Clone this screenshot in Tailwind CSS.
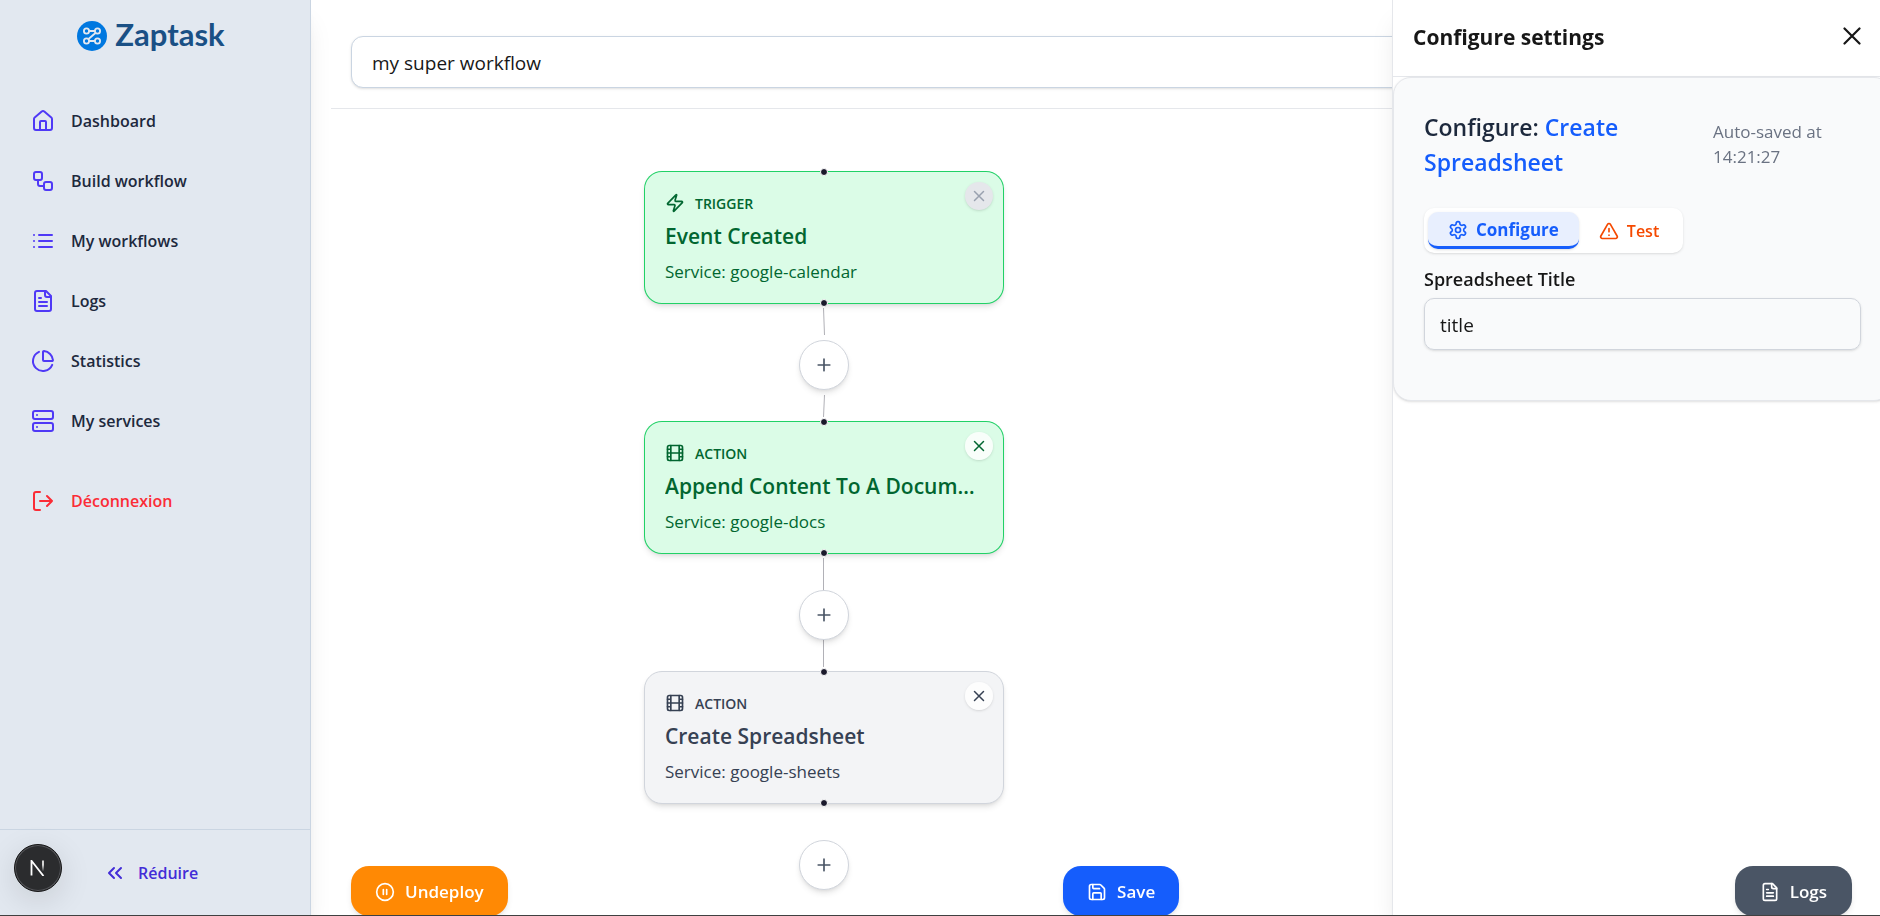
<!DOCTYPE html>
<html lang="en">
<head>
<meta charset="utf-8">
<meta name="viewport" content="width=device-width, initial-scale=1">
<title>Zaptask – Build workflow</title>
<script src="https://cdn.jsdelivr.net/npm/@tailwindcss/browser@4"></script>
</head>
<body class="h-screen overflow-hidden bg-white font-['Open_Sans','Noto_Sans',sans-serif] text-neutral-900">

<!-- Shared icon shapes -->
<svg class="hidden" aria-hidden="true">
  <symbol id="i-home" viewBox="0 0 24 24"><path d="M15 21v-8a1 1 0 0 0-1-1h-4a1 1 0 0 0-1 1v8"/><path d="M3 10a2 2 0 0 1 .709-1.528l7-6a2 2 0 0 1 2.582 0l7 6A2 2 0 0 1 21 10v9a2 2 0 0 1-2 2H5a2 2 0 0 1-2-2z"/></symbol>
  <symbol id="i-workflow" viewBox="0 0 24 24"><rect width="8" height="8" x="3" y="3" rx="2"/><path d="M7 11v4a2 2 0 0 0 2 2h4"/><rect width="8" height="8" x="13" y="13" rx="2"/></symbol>
  <symbol id="i-list" viewBox="0 0 24 24"><path d="M3 12h.01M3 18h.01M3 6h.01M8 12h13M8 18h13M8 6h13"/></symbol>
  <symbol id="i-file" viewBox="0 0 24 24"><path d="M15 2H6a2 2 0 0 0-2 2v16a2 2 0 0 0 2 2h12a2 2 0 0 0 2-2V7Z"/><path d="M14 2v4a2 2 0 0 0 2 2h4M10 9H8M16 13H8M16 17H8"/></symbol>
  <symbol id="i-pie" viewBox="0 0 24 24"><path d="M21 12c.552 0 1.005-.449.95-.998a10 10 0 0 0-8.953-8.951c-.55-.055-.998.398-.998.95v8a1 1 0 0 0 1 1z"/><path d="M21.21 15.89A10 10 0 1 1 8 2.83"/></symbol>
  <symbol id="i-server" viewBox="0 0 24 24"><rect width="20" height="8" x="2" y="2" rx="2"/><rect width="20" height="8" x="2" y="14" rx="2"/><path d="M6 6h.01M6 18h.01"/></symbol>
  <symbol id="i-logout" viewBox="0 0 24 24"><path d="M9 21H5a2 2 0 0 1-2-2V5a2 2 0 0 1 2-2h4M16 17l5-5-5-5M21 12H9"/></symbol>
  <symbol id="i-chevrons" viewBox="0 0 24 24"><path d="m11 17-5-5 5-5M18 17l-5-5 5-5"/></symbol>
  <symbol id="i-zap" viewBox="0 0 24 24"><path d="M4 14a1 1 0 0 1-.78-1.63l9.9-10.2a.5.5 0 0 1 .86.46l-1.92 6.02A1 1 0 0 0 13 10h7a1 1 0 0 1 .78 1.63l-9.9 10.2a.5.5 0 0 1-.86-.46l1.92-6.02A1 1 0 0 0 11 14z"/></symbol>
  <symbol id="i-film" viewBox="0 0 24 24"><rect width="18" height="18" x="3" y="3" rx="2"/><path d="M7 3v18M3 7.500h4M3 12h18M3 16.500h4M17 3v18M17 7.500h4M17 16.500h4"/></symbol>
  <symbol id="i-x" viewBox="0 0 24 24"><path d="M18 6 6 18M6 6l12 12"/></symbol>
  <symbol id="i-plus" viewBox="0 0 24 24"><path d="M5 12h14M12 5v14"/></symbol>
  <symbol id="i-gear" viewBox="0 0 24 24"><path d="M12.220 2h-.44a2 2 0 0 0-2 2v.18a2 2 0 0 1-1 1.730l-.43.25a2 2 0 0 1-2 0l-.15-.08a2 2 0 0 0-2.730.73l-.22.38a2 2 0 0 0 .73 2.730l.15.1a2 2 0 0 1 1 1.720v.51a2 2 0 0 1-1 1.740l-.15.09a2 2 0 0 0-.73 2.730l.22.38a2 2 0 0 0 2.730.73l.15-.08a2 2 0 0 1 2 0l.43.25a2 2 0 0 1 1 1.730V20a2 2 0 0 0 2 2h.44a2 2 0 0 0 2-2v-.18a2 2 0 0 1 1-1.730l.43-.25a2 2 0 0 1 2 0l.15.08a2 2 0 0 0 2.730-.73l.22-.39a2 2 0 0 0-.73-2.730l-.15-.08a2 2 0 0 1-1-1.740v-.5a2 2 0 0 1 1-1.740l.15-.09a2 2 0 0 0 .73-2.730l-.22-.38a2 2 0 0 0-2.730-.73l-.15.08a2 2 0 0 1-2 0l-.43-.25a2 2 0 0 1-1-1.730V4a2 2 0 0 0-2-2z"/><circle cx="12" cy="12" r="3"/></symbol>
  <symbol id="i-warn" viewBox="0 0 24 24"><path d="m21.730 18-8-14a2 2 0 0 0-3.480 0l-8 14A2 2 0 0 0 4 21h16a2 2 0 0 0 1.730-3M12 9v4M12 17h.01"/></symbol>
  <symbol id="i-pause" viewBox="0 0 24 24"><circle cx="12" cy="12" r="10"/><path d="M10 15V9M14 15V9"/></symbol>
  <symbol id="i-save" viewBox="0 0 24 24"><path d="M15.200 3a2 2 0 0 1 1.400.6l3.800 3.800a2 2 0 0 1 .6 1.400V19a2 2 0 0 1-2 2H5a2 2 0 0 1-2-2V5a2 2 0 0 1 2-2z"/><path d="M17 21v-7a1 1 0 0 0-1-1H8a1 1 0 0 0-1 1v7M7 3v4a1 1 0 0 0 1 1h7"/></symbol>
</svg>

<div class="flex h-full">
  <!-- Sidebar -->
  <aside class="relative z-10 flex w-[311px] shrink-0 flex-col border-r border-slate-300 bg-slate-200 shadow-xl">
    <a href="#" class="flex h-[72px] items-center justify-center gap-2 pr-3 pl-1 font-['Lato'] text-[31px] leading-9 font-bold text-[#1a5085]">
      <svg class="size-[30px]" viewBox="0 0 30 30" fill="none" stroke="#e2e8f0" stroke-width="1.800" aria-hidden="true">
        <circle cx="15" cy="15" r="15" fill="#0078e0" stroke="none"/>
        <circle cx="9.500" cy="10" r="2.600"/><circle cx="20.500" cy="10" r="2.600"/><circle cx="9.500" cy="20" r="2.600"/><circle cx="20.500" cy="20" r="2.600"/>
        <path d="M12 10h6M12 20h6M18.500 12 11.500 18"/>
      </svg>
      <span class="pb-1">Zaptask</span>
    </a>
    <nav class="mt-[23px] flex flex-1 flex-col gap-2 px-[15px] text-[16px] font-semibold text-slate-800">
      <a href="#" class="flex h-[52px] items-center gap-4 px-4"><svg class="size-6 fill-none stroke-indigo-600 stroke-2 [stroke-linecap:round] [stroke-linejoin:round]"><use href="#i-home"/></svg>Dashboard</a>
      <a href="#" class="flex h-[52px] items-center gap-4 px-4"><svg class="size-6 fill-none stroke-indigo-600 stroke-2 [stroke-linecap:round] [stroke-linejoin:round]"><use href="#i-workflow"/></svg>Build workflow</a>
      <a href="#" class="flex h-[52px] items-center gap-4 px-4"><svg class="size-6 fill-none stroke-indigo-600 stroke-2 [stroke-linecap:round] [stroke-linejoin:round]"><use href="#i-list"/></svg>My workflows</a>
      <a href="#" class="flex h-[52px] items-center gap-4 px-4"><svg class="size-6 fill-none stroke-indigo-600 stroke-2 [stroke-linecap:round] [stroke-linejoin:round]"><use href="#i-file"/></svg>Logs</a>
      <a href="#" class="flex h-[52px] items-center gap-4 px-4"><svg class="size-6 fill-none stroke-indigo-600 stroke-2 [stroke-linecap:round] [stroke-linejoin:round]"><use href="#i-pie"/></svg>Statistics</a>
      <a href="#" class="flex h-[52px] items-center gap-4 px-4"><svg class="size-6 fill-none stroke-indigo-600 stroke-2 [stroke-linecap:round] [stroke-linejoin:round]"><use href="#i-server"/></svg>My services</a>
      <button type="button" class="mt-5 flex h-[52px] items-center gap-4 px-4 text-[#fb2c36]"><svg class="size-6 fill-none stroke-current stroke-2 [stroke-linecap:round] [stroke-linejoin:round]"><use href="#i-logout"/></svg>Déconnexion</button>
    </nav>
    <div class="flex h-[87px] items-center border-t border-slate-300 pl-[14px]">
      <button type="button" aria-label="Open developer tools" class="mb-[11px] flex size-12 items-center justify-center rounded-full border border-neutral-900 bg-[#2b2c2e] shadow-[0_8px_32px_rgb(0_0_0/0.12),inset_0_0_0_1px_#55565a]">
        <svg class="h-4 w-4" viewBox="0 0 16 16" fill="none" stroke-width="1.800" aria-hidden="true">
          <defs><linearGradient id="n-fade" x1="0" y1="0" x2="0" y2="1"><stop offset="0.4" stop-color="#fff"/><stop offset="1" stop-color="#fff" stop-opacity="0"/></linearGradient></defs>
          <path d="M1.500 15.500V.8L13.500 16" stroke="#fff"/><path d="M12.200 .5h1.600v11h-1.600z" fill="url(#n-fade)"/>
        </svg>
      </button>
      <button type="button" class="ml-[41px] flex items-center gap-[11px] text-[16px] font-semibold text-indigo-700"><svg class="size-6 fill-none stroke-current stroke-2 [stroke-linecap:round] [stroke-linejoin:round]"><use href="#i-chevrons"/></svg>Réduire</button>
    </div>
  </aside>

  <!-- Workflow editor -->
  <main class="flex min-w-0 flex-1 flex-col px-5">
    <header class="border-b border-gray-200 px-5 pt-9 pb-5">
      <input type="text" aria-label="Workflow name" value="my super workflow" class="block h-[52px] w-full rounded-xl border border-slate-300 bg-white px-5 pt-[2px] text-[19px] shadow-sm">
    </header>

    <section aria-label="Workflow canvas" class="relative flex-1">
      <svg class="absolute top-0 left-[313px] h-[757px] w-[360px] fill-none stroke-[#b1b1b7]" aria-hidden="true">
        <path d="M179.500 199l1 27M180.500 286l-1 22M179.500 449v109"/>
      </svg>
      <ol class="absolute top-[62px] left-[313px] flex w-[360px] flex-col">
        <li class="flex flex-col items-center">
          <article class="relative h-[133px] w-full rounded-[18px] border border-green-500/85 bg-green-100 px-5 pt-[19px] text-green-800 shadow-md">
            <p class="flex h-6 items-center gap-[10px] text-[14px] font-semibold"><svg class="size-5 fill-none stroke-current stroke-2 [stroke-linecap:round] [stroke-linejoin:round]"><use href="#i-zap"/></svg>TRIGGER</p>
            <h2 class="mt-[5px] h-8 truncate text-[21px] leading-8 font-semibold">Event Created</h2>
            <p class="mt-2 text-[17px] leading-6">Service: google-calendar</p>
            <button type="button" disabled aria-label="Delete step" class="absolute top-[10px] right-[10px] flex size-7 items-center justify-center rounded-full bg-gray-200 text-gray-400 shadow-sm"><svg class="size-[18px] fill-none stroke-current stroke-2 [stroke-linecap:round]"><use href="#i-x"/></svg></button>
            <span class="absolute -top-1 left-1/2 size-2 -translate-x-1/2 rounded-full border border-white bg-[#1a192b]"></span>
            <span class="absolute -bottom-1 left-1/2 size-2 -translate-x-1/2 rounded-full border border-white bg-[#1a192b]"></span>
          </article>
          <button type="button" aria-label="Add step" class="relative mt-[36px] mb-[31px] flex size-[50px] items-center justify-center rounded-full border border-gray-300 bg-white text-gray-600 shadow-md"><svg class="size-5 fill-none stroke-current stroke-2 [stroke-linecap:round]"><use href="#i-plus"/></svg></button>
        </li>
        <li class="flex flex-col items-center">
          <article class="relative h-[133px] w-full rounded-[18px] border border-green-500/85 bg-green-100 px-5 pt-[19px] text-green-800 shadow-md">
            <p class="flex h-6 items-center gap-[10px] text-[14px] font-semibold"><svg class="size-5 fill-none stroke-current stroke-2 [stroke-linecap:round] [stroke-linejoin:round]"><use href="#i-film"/></svg>ACTION</p>
            <h2 class="mt-[5px] h-8 truncate text-[21px] leading-8 font-semibold">Append Content To A Document</h2>
            <p class="mt-2 text-[17px] leading-6">Service: google-docs</p>
            <button type="button" aria-label="Delete step" class="absolute top-[10px] right-[10px] flex size-7 items-center justify-center rounded-full bg-white/80 shadow-sm"><svg class="size-[18px] fill-none stroke-current stroke-2 [stroke-linecap:round]"><use href="#i-x"/></svg></button>
            <span class="absolute -top-1 left-1/2 size-2 -translate-x-1/2 rounded-full border border-white bg-[#1a192b]"></span>
            <span class="absolute -bottom-1 left-1/2 size-2 -translate-x-1/2 rounded-full border border-white bg-[#1a192b]"></span>
          </article>
          <button type="button" aria-label="Add step" class="relative mt-[36px] mb-[31px] flex size-[50px] items-center justify-center rounded-full border border-gray-300 bg-white text-gray-600 shadow-md"><svg class="size-5 fill-none stroke-current stroke-2 [stroke-linecap:round]"><use href="#i-plus"/></svg></button>
        </li>
        <li class="flex flex-col items-center">
          <article class="relative h-[133px] w-full rounded-[18px] border border-gray-300 bg-gray-100 px-5 pt-[19px] text-gray-700 shadow-md">
            <p class="flex h-6 items-center gap-[10px] text-[14px] font-semibold"><svg class="size-5 fill-none stroke-current stroke-2 [stroke-linecap:round] [stroke-linejoin:round]"><use href="#i-film"/></svg>ACTION</p>
            <h2 class="mt-[5px] h-8 truncate text-[21px] leading-8 font-semibold">Create Spreadsheet</h2>
            <p class="mt-2 text-[17px] leading-6">Service: google-sheets</p>
            <button type="button" aria-label="Delete step" class="absolute top-[10px] right-[10px] flex size-7 items-center justify-center rounded-full bg-white/80 shadow-sm"><svg class="size-[18px] fill-none stroke-current stroke-2 [stroke-linecap:round]"><use href="#i-x"/></svg></button>
            <span class="absolute -top-1 left-1/2 size-2 -translate-x-1/2 rounded-full border border-white bg-[#1a192b]"></span>
            <span class="absolute -bottom-1 left-1/2 size-2 -translate-x-1/2 rounded-full border border-white bg-[#1a192b]"></span>
          </article>
          <button type="button" aria-label="Add step" class="relative mt-[36px] mb-[31px] flex size-[50px] items-center justify-center rounded-full border border-gray-300 bg-white text-gray-600 shadow-md"><svg class="size-5 fill-none stroke-current stroke-2 [stroke-linecap:round]"><use href="#i-plus"/></svg></button>
        </li>
      </ol>
    </section>

    <footer class="relative z-30 flex items-end justify-between pr-2 pl-5 text-[17px] font-semibold text-white">
      <button type="button" class="flex h-[50px] items-center gap-[10px] rounded-[18px] bg-[#ff8904] px-6 pt-[2px] shadow-md"><svg class="size-5 fill-none stroke-current stroke-2 [stroke-linecap:round] [stroke-linejoin:round]"><use href="#i-pause"/></svg>Undeploy</button>
      <button type="button" class="flex h-[50px] items-center gap-[10px] rounded-[18px] bg-[#155dfc] px-6 pt-[2px] shadow-md"><svg class="size-5 fill-none stroke-current stroke-2 [stroke-linecap:round] [stroke-linejoin:round]"><use href="#i-save"/></svg>Save</button>
      <button type="button" class="flex h-[50px] items-center gap-[10px] rounded-[18px] bg-gray-600 px-[25px] pt-[2px] shadow-md"><svg class="size-5 fill-none stroke-current stroke-2 [stroke-linecap:round] [stroke-linejoin:round]"><use href="#i-file"/></svg>Logs</button>
    </footer>
  </main>
</div>

<!-- Settings drawer -->
<aside class="fixed inset-y-0 right-0 z-20 w-[488px] overflow-hidden border-l border-gray-200 bg-white shadow-xl">
  <header class="flex h-[77px] items-center justify-between border-b border-gray-200 pr-[18px] pb-1 pl-5">
    <h2 class="pt-[3px] text-[21px] font-bold">Configure settings</h2>
    <button type="button" aria-label="Close settings" class="p-px"><svg class="size-[18px] fill-none stroke-current [stroke-linecap:round] [stroke-width:2.200]" viewBox="0 0 18 18"><path d="M1.500 1.500l15 15M16.500 1.500l-15 15"/></svg></button>
  </header>
  <div class="-mr-3 h-[324px] rounded-[18px] border border-gray-200 bg-[#f9fafb] px-[30px] pt-8 shadow-sm">
    <div class="flex items-center justify-between">
      <h3 class="w-[240px] text-[23px] leading-[35px] font-semibold text-slate-800">Configure: <span class="text-[#155dfc]">Create Spreadsheet</span></h3>
      <p class="w-[148px] pb-[2px] text-[17px] leading-[25px] text-gray-500">Auto-saved at 14:21:27</p>
    </div>
    <div class="mt-7 flex w-fit gap-1 rounded-[10px] bg-white p-1 shadow-sm">
      <button type="button" class="flex h-[37px] items-center gap-2 rounded-[10px] border-b-3 border-blue-600 bg-[#e8effe] px-5 pt-[2px] text-[17px] font-bold text-blue-600 shadow-sm"><svg class="size-5 fill-none stroke-current stroke-2 [stroke-linecap:round] [stroke-linejoin:round]"><use href="#i-gear"/></svg>Configure</button>
      <button type="button" class="flex h-[37px] items-center gap-2 pr-5 pl-4 text-[16px] font-semibold text-[#f54900]"><svg class="size-5 fill-none stroke-current stroke-2 [stroke-linecap:round] [stroke-linejoin:round]"><use href="#i-warn"/></svg>Test</button>
    </div>
    <label for="sheet-title" class="mt-3 block text-[18px] leading-7 font-semibold">Spreadsheet Title</label>
    <input id="sheet-title" type="text" value="title" class="mt-[5px] block h-[52px] w-full rounded-[10px] border border-gray-300 bg-transparent px-[15px] pt-[2px] text-[19px] shadow-sm">
  </div>
</aside>

<div class="fixed inset-x-0 bottom-0 z-40 h-px bg-neutral-700"></div>
</body>
</html>
